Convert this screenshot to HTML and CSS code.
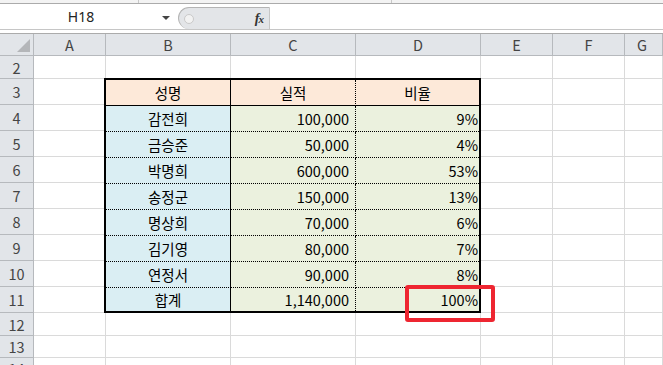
FILE: index.html
```html
<!DOCTYPE HTML>
<html>

<head>
    <meta charset="UTF-8">
    <link rel="stylesheet" href="styles.css">
</head>

<body>
    <div class="ribbon-edge">
        <span class="rib-sep sep-1"></span>
        <span class="rib-sep sep-2"></span>
    </div>

    <div class="formula-bar">
        <div class="name-box">
            <span class="name-text">H18</span>
            <span class="drop-arrow"></span>
        </div>
        <div class="fx-zone">
            <span class="grip"></span>
            <span class="fx">f<span class="fx-x">x</span></span>
        </div>
        <div class="formula-input"></div>
    </div>
    <div class="bar-gap"></div>

    <div class="sheet">
        <div class="head corner"><span class="corner-tri"></span></div>
        <div class="head col-head">A</div>
        <div class="head col-head">B</div>
        <div class="head col-head">C</div>
        <div class="head col-head">D</div>
        <div class="head col-head">E</div>
        <div class="head col-head">F</div>
        <div class="head col-head col-g">G</div>

        <div class="head row-head">2</div>
        <div class="cell"></div><div class="cell"></div><div class="cell"></div><div class="cell"></div>
        <div class="cell"></div><div class="cell"></div><div class="cell"></div>

        <div class="head row-head">3</div>
        <div class="cell"></div><div class="cell"></div><div class="cell"></div><div class="cell"></div>
        <div class="head row-head">4</div>
        <div class="cell"></div><div class="cell"></div><div class="cell"></div><div class="cell"></div>
        <div class="head row-head">5</div>
        <div class="cell"></div><div class="cell"></div><div class="cell"></div><div class="cell"></div>
        <div class="head row-head">6</div>
        <div class="cell"></div><div class="cell"></div><div class="cell"></div><div class="cell"></div>
        <div class="head row-head">7</div>
        <div class="cell"></div><div class="cell"></div><div class="cell"></div><div class="cell"></div>
        <div class="head row-head">8</div>
        <div class="cell"></div><div class="cell"></div><div class="cell"></div><div class="cell"></div>
        <div class="head row-head">9</div>
        <div class="cell"></div><div class="cell"></div><div class="cell"></div><div class="cell"></div>
        <div class="head row-head">10</div>
        <div class="cell"></div><div class="cell"></div><div class="cell"></div><div class="cell"></div>
        <div class="head row-head">11</div>
        <div class="cell"></div><div class="cell"></div><div class="cell"></div><div class="cell"></div>

        <div class="head row-head">12</div>
        <div class="cell"></div><div class="cell"></div><div class="cell"></div><div class="cell"></div>
        <div class="cell"></div><div class="cell"></div><div class="cell"></div>
        <div class="head row-head">13</div>
        <div class="cell"></div><div class="cell"></div><div class="cell"></div><div class="cell"></div>
        <div class="cell"></div><div class="cell"></div><div class="cell"></div>
        <div class="head row-head">14</div>
        <div class="cell"></div><div class="cell"></div><div class="cell"></div><div class="cell"></div>
        <div class="cell"></div><div class="cell"></div><div class="cell"></div>

        <!-- B3:D11 -->
        <div class="data-block">
            <div class="d head-row name">성명</div>
            <div class="d head-row amount">실적</div>
            <div class="d head-row ratio">비율</div>

            <div class="d name">감전희</div>
            <div class="d amount num">100,000</div>
            <div class="d ratio num">9%</div>

            <div class="d name">금승준</div>
            <div class="d amount num">50,000</div>
            <div class="d ratio num">4%</div>

            <div class="d name">박명희</div>
            <div class="d amount num">600,000</div>
            <div class="d ratio num">53%</div>

            <div class="d name">송정군</div>
            <div class="d amount num">150,000</div>
            <div class="d ratio num">13%</div>

            <div class="d name">명상희</div>
            <div class="d amount num">70,000</div>
            <div class="d ratio num">6%</div>

            <div class="d name">김기영</div>
            <div class="d amount num">80,000</div>
            <div class="d ratio num">7%</div>

            <div class="d name">연정서</div>
            <div class="d amount num">90,000</div>
            <div class="d ratio num">8%</div>

            <div class="d name last">합계</div>
            <div class="d amount num last">1,140,000</div>
            <div class="d ratio num last">100%</div>
        </div>
    </div>

    <div class="highlight"></div>
</body>

</html>
```

FILE: styles.css
```css
body {
    margin: 0;
    position: relative;
    width: 663px;
    height: 365px;
    overflow: hidden;
    background: #fff;
    font-family: "Noto Sans CJK KR", "Noto Sans", sans-serif;
}

.ribbon-edge {
    position: relative;
    height: 3px;
    background: #f3f3f3;
    border-bottom: 1px solid #ababab;
}

.rib-sep {
    position: absolute;
    top: 0;
    width: 1px;
    height: 3px;
    background: #c8c8c8;
}

.sep-1 { left: 138px; }
.sep-2 { left: 391px; }

.formula-bar {
    display: flex;
    height: 25px;
    border-bottom: 1px solid #c6c6c6;
}

.name-box {
    width: 176px;
    display: flex;
    align-items: center;
    position: relative;
}

.name-text {
    width: 162px;
    text-align: center;
    font-family: "Noto Sans", sans-serif;
    font-size: 14px;
    color: #222;
}

.drop-arrow {
    width: 0;
    height: 0;
    border-left: 4px solid transparent;
    border-right: 4px solid transparent;
    border-top: 4px solid #444;
    margin-top: 2px;
}

.fx-zone {
    width: 92px;
    margin-top: 3px;
    margin-left: 2px;
    background: #e3e5e8;
    border: 1px solid #b4b4b4;
    border-right: 1px solid #c6c6c6;
    border-bottom: none;
    border-radius: 12px 0 0 12px;
    display: flex;
    align-items: center;
    justify-content: space-between;
    padding: 0 6px 0 5px;
    box-sizing: border-box;
}

.grip {
    width: 8px;
    height: 8px;
    border-radius: 50%;
    background: #f2f2f2;
    border: 1px solid #c9c9c9;
}

.fx {
    font-family: "Liberation Serif", serif;
    font-style: italic;
    font-weight: bold;
    font-size: 14px;
    color: #333;
    letter-spacing: -1px;
}

.fx-x {
    font-size: 11px;
}

.formula-input {
    flex: 1;
}

.bar-gap {
    height: 3px;
    border-bottom: 1px solid #ababab;
}

.sheet {
    display: grid;
    grid-template-columns: 34px 72px 125px 125px 125px 72px 72px 1fr;
    grid-template-rows: 22px 23px repeat(9, 26px) 23px 22px 1fr;
    height: 331px;
    font-size: 14.5px;
}

.cell {
    box-sizing: border-box;
    border-right: 1px solid #dadada;
    border-bottom: 1px solid #dadada;
}

.head {
    box-sizing: border-box;
    background: #e2e5e9;
    border-right: 1px solid #b6b9bd;
    border-bottom: 1px solid #b6b9bd;
    color: #444;
    display: flex;
    align-items: center;
    justify-content: center;
    font-size: 14.5px;
}

.col-g {
    justify-content: flex-start;
    padding-left: 12px;
}

.corner {
    position: relative;
}

.corner-tri {
    position: absolute;
    right: 3px;
    bottom: 3px;
    width: 0;
    height: 0;
    border-left: 13px solid transparent;
    border-bottom: 13px solid #b4b6b9;
}

.data-block {
    grid-column: 3 / 6;
    grid-row: 3 / 12;
    margin: -1px 0 0 -2px;
    border: 2px solid #000;
    display: grid;
    grid-template-columns: 125px 125px 123px;
    grid-template-rows: repeat(8, 26px) 23px;
    background: #fff;
}

.d {
    box-sizing: border-box;
    display: flex;
    align-items: center;
    color: #000;
    border-bottom: 1px dotted #000;
}

.d.last {
    border-bottom: none;
}

.name {
    justify-content: center;
    background: #daeef3;
    border-right: 1px solid #000;
}

.amount {
    background: #ebf1de;
    border-right: 1px dotted #000;
}

.ratio {
    background: #ebf1de;
}

.num {
    justify-content: flex-end;
}

.amount.num {
    padding-right: 6px;
}

.ratio.num {
    padding-right: 1px;
}

.d.head-row {
    background: #fde9d9;
    justify-content: center;
    border-bottom: 1px solid #000;
}

.highlight {
    position: absolute;
    left: 405px;
    top: 285px;
    width: 90px;
    height: 37px;
    box-sizing: border-box;
    border: 4px solid #ee2631;
    border-radius: 3px;
}
```
